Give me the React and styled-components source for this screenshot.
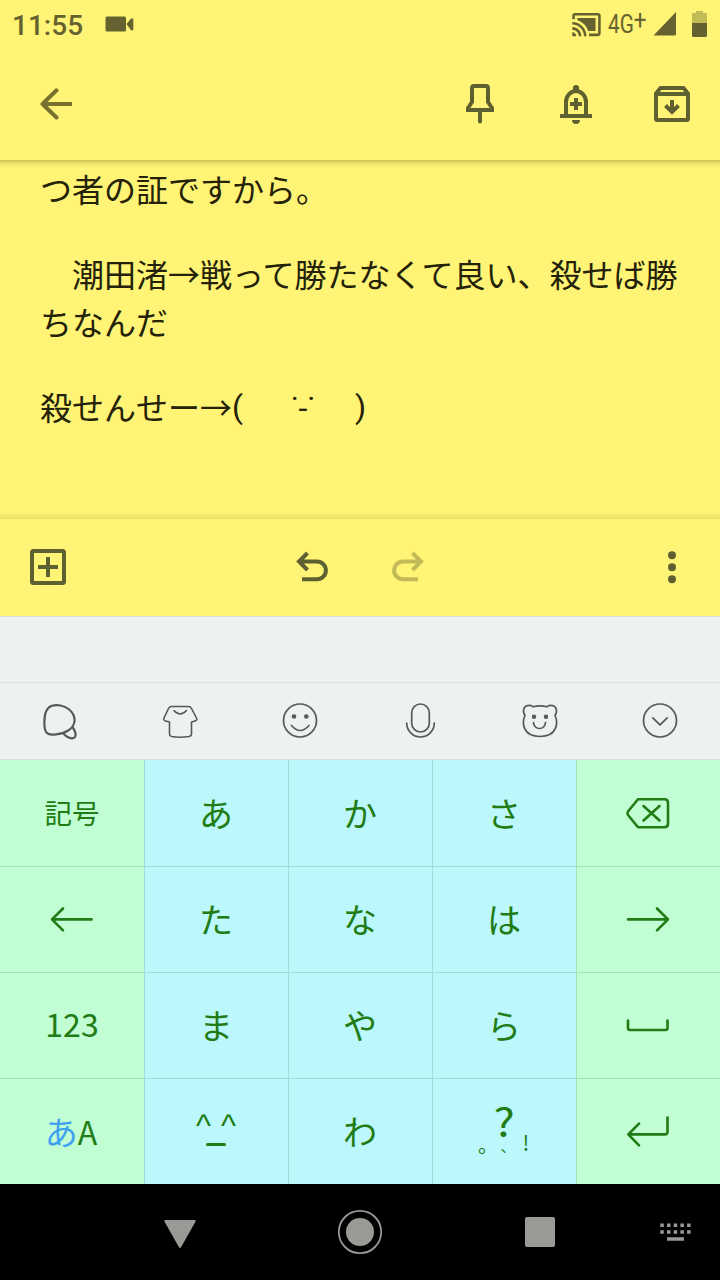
import React from "react";
import styled, { createGlobalStyle } from "styled-components";
import { MdCastConnected } from "react-icons/md";

const colors = {
  note: "#fff475",
  status: "#66622f",
  icon: "#5f6032",
  back: "#7a702f",
  text: "#242208",
  panel: "#edf1f0",
  panelLine: "#dbdfde",
  panelIcon: "#555a58",
  side: "#c1fed3",
  kana: "#bcf8fb",
  key: "#227c15",
  blue: "#3da0f2",
  nav: "#989a96"
};

const jp = `"Noto Sans CJK JP", sans-serif`;

const GlobalStyle = createGlobalStyle`
  body {
    margin: 0;
    background: #000;
  }
  * {
    box-sizing: border-box;
  }
`;

const Screen = styled.div`
  width: 720px;
  height: 1280px;
  display: flex;
  flex-direction: column;
  overflow: hidden;
  background: ${colors.note};
  font-family: ${jp};
`;

const Svg = styled.svg`
  display: block;
  flex: none;
  fill: none;
  stroke: currentColor;
  stroke-width: ${props => props.$weight};
`;

const Icon = ({ x = 0, y = 0, width, height, weight = 4, round, children }) => (
  <Svg
    width={width}
    height={height}
    viewBox={`${x} ${y} ${width} ${height}`}
    $weight={weight}
    strokeLinecap={round ? "round" : "butt"}
    strokeLinejoin={round ? "round" : "miter"}
    aria-hidden="true"
  >
    {children}
  </Svg>
);

const StatusBar = styled.header`
  display: flex;
  align-items: center;
  height: 48px;
  padding: 0 12px 0 12px;
  color: ${colors.status};
`;

const Clock = styled.span`
  width: 93px;
  font: 500 28px/48px Roboto, sans-serif;
  letter-spacing: 0;
  padding-top: 3px;
`;

const StatusRight = styled.div`
  display: flex;
  align-items: center;
  margin-left: auto;
`;

const Network = styled.span`
  display: flex;
  width: 45px;
  margin-left: 6px;
  padding-top: 1px;
  font: 400 25px/48px Roboto, sans-serif;
  transform: scaleX(0.83);
  transform-origin: left;
`;

const Plus = styled.span`
  font-size: 27px;
  line-height: 38px;
`;

const AppBar = styled.div`
  display: flex;
  align-items: center;
  height: 112px;
  padding: 0 24px 0 40px;
  color: ${colors.icon};
`;

const Back = styled.div`
  margin-right: auto;
  color: ${colors.back};
`;

const Action = styled.div`
  display: flex;
  justify-content: center;
  width: 56px;
  margin-left: 40px;
  &:last-child {
    margin-right: -4px;
  }
`;

const Note = styled.main`
  height: 359px;
  padding: 5px 0 0 40px;
  color: ${colors.text};
  background: linear-gradient(
      rgba(70, 60, 20, 0.28),
      rgba(70, 60, 20, 0.1) 3px,
      rgba(70, 60, 20, 0) 8px
    ),
    linear-gradient(to top, rgba(70, 60, 20, 0.11), rgba(70, 60, 20, 0) 7px),
    ${colors.note};
`;

const Line = styled.div`
  display: flex;
  height: ${props => (props.$blank ? 37.5 : 47.5)}px;
  font-size: 32px;
  line-height: 47.5px;
  white-space: pre;
`;

const Face = styled.span`
  display: flex;
  justify-content: space-between;
  width: 134px;
  padding-top: 1px;
  font-family: Roboto, sans-serif;
`;

const FaceCenter = styled.span`
  padding: 1px 0 0 8px;
`;

const EditBar = styled.div`
  display: grid;
  grid-template-columns: 266px 94px 94px 1fr;
  align-items: center;
  height: 97px;
  padding: 0 44px 1px 30px;
  color: ${colors.icon};
`;

const Faded = styled.div`
  padding-left: 2px;
  color: #c1ba56;
`;

const More = styled.div`
  justify-self: end;
`;

const Candidates = styled.div`
  height: 67px;
  border-top: 1px solid ${colors.panelLine};
  border-bottom: 1px solid ${colors.panelLine};
  background: ${colors.panel};
`;

const Tools = styled.div`
  display: grid;
  grid-template-columns: repeat(6, 120px);
  align-items: center;
  justify-items: center;
  height: 77px;
  padding-bottom: 1px;
  border-bottom: 1px solid ${colors.panelLine};
  background: ${colors.panel};
  color: ${colors.panelIcon};
`;

const Keys = styled.div`
  display: grid;
  grid-template-columns: repeat(5, 144px);
  grid-template-rows: repeat(4, 106px);
`;

const Key = styled.div`
  display: flex;
  align-items: center;
  justify-content: center;
  padding-bottom: ${props => props.$lift || 0}px;
  background: ${props => (props.$side ? colors.side : colors.kana)};
  color: ${colors.key};
  font-size: ${props => props.$size || 34}px;
  line-height: 50px;
  box-shadow: inset ${props => (props.$first ? 0 : 1)}px
    ${props => (props.$top ? 0 : 1)}px rgba(40, 110, 60, 0.2);
`;

const Mode = styled.span`
  color: ${colors.blue};
  font-size: 33px;
`;

const ModeLabel = styled.div`
  margin-right: 2px;
`;

const Emoticon = styled.div`
  display: flex;
  flex-direction: column;
  align-items: center;
  padding-top: 2px;
`;

const Eyes = styled.div`
  height: 24px;
  font-family: "Liberation Sans", sans-serif;
  font-size: 32px;
  line-height: 13px;
  letter-spacing: 10px;
  margin-right: -10px;
`;

const Mouth = styled.div`
  width: 20px;
  height: 3px;
  border-radius: 2px;
  background: currentColor;
`;

const Punctuation = styled.div`
  display: grid;
  grid-template-columns: repeat(3, 24px);
  grid-template-rows: 34px 18px;
  justify-items: center;
`;

const Question = styled.span`
  grid-column: 1 / 4;
  font-size: 39px;
  line-height: 30px;
  transform: scaleX(1.15);
`;

const Mark = styled.span`
  font-size: ${props => props.$size}px;
  line-height: 18px;
  transform: translate(${props => props.$x}px, ${props => props.$y}px);
`;

const NavBar = styled.nav`
  display: grid;
  grid-template-columns: 90px 180px 180px 180px 90px;
  align-items: center;
  justify-items: center;
  height: 96px;
  background: #000;
  color: ${colors.nav};
`;

const Backspace = () => (
  <Icon x={625} y={796} width={46} height={34} weight={2.6} round>
    <path d="M638 799.3H664.5Q668 799.3 668 803V823.5Q668 827.2 664.5 827.2H638L628 815Q626.8 813.2 628 811.5ZM643.5 806L659.5 820.5M659.5 806L643.5 820.5" />
  </Icon>
);

const ArrowLeft = () => (
  <Icon x={50} y={906} width={44} height={27} weight={2.6} round>
    <path d="M91.5 919.4H52M63 908.5L52 919.4L63 930.3" />
  </Icon>
);

const ArrowRight = () => (
  <Icon x={626} y={906} width={44} height={27} weight={2.6} round>
    <path d="M628 919.4H668M657 908.5L668 919.4L657 930.3" />
  </Icon>
);

const Space = () => (
  <Icon x={626} y={1017} width={44} height={16} weight={2.6} round>
    <path d="M628 1020.5V1028Q628 1030 630 1030H665.5Q667.5 1030 667.5 1028V1020.5" />
  </Icon>
);

const Enter = () => (
  <Icon x={626} y={1115} width={44} height={32} weight={2.6} round>
    <path d="M667.5 1117.5V1132Q667.5 1134.4 665 1134.4H628.5M639 1123.7L628.3 1134.4L639 1145.3" />
  </Icon>
);

const rows = [
  [
    { label: "記号", size: 27.5, lift: 2 },
    "あ",
    "か",
    "さ",
    { label: <Backspace /> }
  ],
  [{ label: <ArrowLeft /> }, "た", "な", "は", { label: <ArrowRight /> }],
  [
    { label: "123", size: 32, lift: 5 },
    "ま",
    "や",
    "ら",
    { label: <Space /> }
  ],
  [
    {
      size: 32,
      label: (
        <ModeLabel>
          <Mode>あ</Mode>A
        </ModeLabel>
      )
    },
    <Emoticon>
      <Eyes>^^</Eyes>
      <Mouth />
    </Emoticon>,
    "わ",
    <Punctuation>
      <Question>?</Question>
      <Mark $size={20} $x={8} $y={-3}>
        。
      </Mark>
      <Mark $size={15} $x={4} $y={-2}>
        、
      </Mark>
      <Mark $size={21} $x={-2} $y={-6}>
        !
      </Mark>
    </Punctuation>,
    { label: <Enter /> }
  ]
];

const App = () => (
  <>
    <GlobalStyle />
    <Screen>
      <StatusBar>
        <Clock>11:55</Clock>
        <Icon x={105} y={16} width={29} height={16} weight={0}>
          <path
            fill="currentColor"
            d="M107 16.5H124.5Q126 16.5 126 18V30Q126 31.5 124.5 31.5H107Q105.5 31.5 105.5 30V18Q105.5 16.5 107 16.5ZM126.5 24L131 18.5H133.3V30.3H131Z"
          />
        </Icon>
        <StatusRight>
          <MdCastConnected size={31} />
          <Network>
            4G<Plus>+</Plus>
          </Network>
          <Icon x={653} y={13} width={24} height={24} weight={0}>
            <path
              fill="currentColor"
              d="M653.5 36.5L676 13V35Q676 36.5 674.5 36.5Z"
            />
          </Icon>
          <Icon x={677} y={10} width={31} height={28} weight={0}>
            <path
              fill="#c3bb57"
              d="M696 11H703V13H706Q707 13 707 14V24H692V14Q692 13 693 13H696Z"
            />
            <path
              fill="currentColor"
              d="M692 23H707V35.5Q707 37 705.5 37H693.5Q692 37 692 35.5Z"
            />
          </Icon>
        </StatusRight>
      </StatusBar>

      <AppBar>
        <Back>
          <Icon x={40} y={88} width={33} height={32}>
            <path d="M72 104H43" />
            <path
              strokeLinecap="round"
              strokeLinejoin="round"
              d="M56.5 90.3L42.5 104L56.5 117.5"
            />
          </Icon>
        </Back>
        <Action>
          <Icon x={464} y={82} width={32} height={44}>
            <path d="M472 102V88Q472 86 474 86H486Q488 86 488 88V102L492 108V110H468V108Z" />
            <path strokeLinecap="round" d="M480 110V121.5" />
          </Icon>
        </Action>
        <Action>
          <Icon x={558} y={82} width={36} height={44}>
            <path d="M566 116V102A10 11 0 0 1 586 102V116M560 116H592M576 98V110M570 104H582" />
            <path
              fill="currentColor"
              stroke="none"
              d="M573 91V88A3 3 0 0 1 579 88V91ZM572 120H580A4 4 0 0 1 572 120Z"
            />
          </Icon>
        </Action>
        <Action>
          <Icon x={652} y={82} width={40} height={44}>
            <path
              strokeLinejoin="round"
              d="M656 93.5L660.5 88H683.5L688 93.5V118.5Q688 120 686.5 120H657.5Q656 120 656 118.5ZM656 94H688"
            />
            <path d="M672 100V111M665.5 105.5L672 112L678.5 105.5" />
          </Icon>
        </Action>
      </AppBar>

      <Note>
        <Line>つ者の証ですから。</Line>
        <Line $blank />
        <Line>　潮田渚→戦って勝たなくて良い、殺せば勝</Line>
        <Line>ちなんだ</Line>
        <Line $blank />
        <Line>
          殺せんせー→
          <Face>
            <span>(</span>
            <FaceCenter>˙-˙</FaceCenter>
            <span>)</span>
          </Face>
        </Line>
      </Note>

      <EditBar>
        <Icon x={30} y={549} width={36} height={36}>
          <rect x="32" y="551" width="32" height="32" rx="1.5" />
          <path d="M48 557V577M38 567H58" />
        </Icon>
        <Icon x={296} y={549} width={34} height={36}>
          <path d="M307.5 553L299 561.5L307.5 570M299 561.5H317A8.8 8.8 0 0 1 317 579.3H302" />
        </Icon>
        <Faded>
          <Icon x={392} y={549} width={34} height={36}>
            <path d="M412.5 553L421 561.5L412.5 570M421 561.5H403A8.8 8.8 0 0 0 403 579.3H418" />
          </Icon>
        </Faded>
        <More>
          <Icon x={668} y={549} width={8} height={36} weight={0}>
            <g fill="currentColor">
              <circle cx="672" cy="555.3" r="4" />
              <circle cx="672" cy="567.3" r="4" />
              <circle cx="672" cy="579.3" r="4" />
            </g>
          </Icon>
        </More>
      </EditBar>

      <Candidates />

      <Tools>
        <Icon x={40} y={700} width={40} height={41} weight={2.2} round>
          <path d="M52 705.8C57 704.3 64 705.5 68.5 709C73 712.5 75 717 74.5 721.5C73.5 729 65 733.8 56 734.4C50 735 45 735 44.5 726C44 718 45 708 52 705.8ZM63.5 733.5C67 737.5 71 739 74.2 737.8C77 736 75 730.5 72.8 727.5" />
        </Icon>
        <Icon x={160} y={700} width={40} height={41} weight={1.6} round>
          <path d="M171.5 706.5H188.5Q190.5 706.5 191.5 708.5L196.5 718Q197.5 720.5 195 721L191.5 722V734Q191.5 736 189 736.5Q180 738 171.5 736.5Q169.5 736 169.5 734V722L165.5 721Q163 720 164 718L168.5 708.5Q169.5 706.5 171.5 706.5ZM174 710.5Q180 717.5 186.5 710.5" />
        </Icon>
        <Icon x={280} y={700} width={40} height={41} weight={1.7} round>
          <circle cx="300" cy="720.5" r="16.5" />
          <path d="M291.5 725.5Q300 735.5 309 725.5" />
          <g fill="currentColor" stroke="none">
            <circle cx="294" cy="716.5" r="2.3" />
            <circle cx="306.3" cy="716.5" r="2.3" />
          </g>
        </Icon>
        <Icon x={400} y={700} width={40} height={41} weight={1.7} round>
          <rect x="411.7" y="704" width="17.6" height="28" rx="8.8" />
          <path d="M406.7 723A13.8 14 0 0 0 434.3 723" />
        </Icon>
        <Icon x={520} y={700} width={40} height={41} weight={1.7} round>
          <path d="M533 706.8Q540 705 547 706.8C549 704.5 556.5 704.5 556.5 711Q556.5 713.5 555 715.5C558 722 558 736.5 540 736.5C522 736.5 522 722 525 715.5Q523.5 713.5 523.5 711C523.5 704.5 531 704.5 533 706.8ZM533.5 722.5A6 6 0 0 0 545.5 722.5" />
          <g fill="currentColor" stroke="none">
            <circle cx="534" cy="716.7" r="2.2" />
            <circle cx="546" cy="716.7" r="2.2" />
          </g>
        </Icon>
        <Icon x={640} y={700} width={40} height={41} weight={1.7} round>
          <circle cx="660" cy="720.5" r="16.5" />
          <path d="M652.8 717.8L660 724.8L667.2 717.8" />
        </Icon>
      </Tools>

      <Keys>
        {rows.map((row, y) =>
          row.map((key, x) => (
            <Key
              key={`${y}-${x}`}
              $side={x === 0 || x === 4}
              $first={x === 0}
              $top={y === 0}
              $size={key.size}
              $lift={key.lift}
            >
              {key.label || key}
            </Key>
          ))
        )}
      </Keys>

      <NavBar>
        <span />
        <Icon x={164} y={1216} width={32} height={32} weight={2} round>
          <path fill="currentColor" d="M165.3 1221H194.7L180 1247Z" />
        </Icon>
        <Icon x={337} y={1209} width={46} height={46} weight={1.8}>
          <circle cx="360" cy="1232" r="21.2" />
          <circle cx="360" cy="1232" r="14" fill="currentColor" stroke="none" />
        </Icon>
        <Icon x={525} y={1217} width={30} height={30} weight={0}>
          <rect
            x="525"
            y="1217"
            width="30"
            height="30"
            rx="2"
            fill="currentColor"
          />
        </Icon>
        <Icon x={660} y={1223} width={31} height={18} weight={3.5}>
          <path
            strokeDasharray="3.5 3.2"
            d="M660.3 1225.3H691M660.3 1232H691"
          />
          <path d="M667 1239H684" />
        </Icon>
      </NavBar>
    </Screen>
  </>
);

export default App;
